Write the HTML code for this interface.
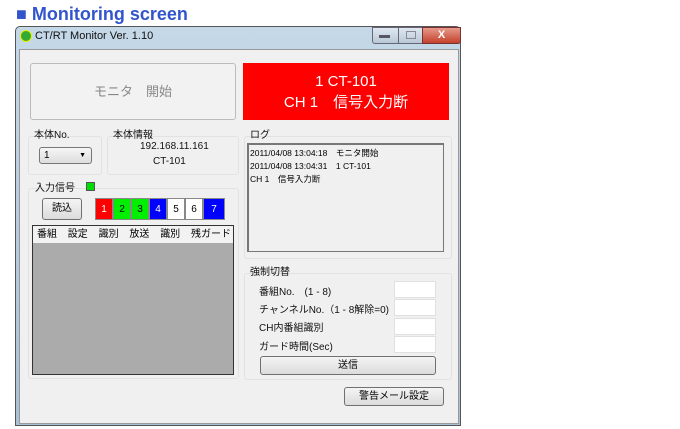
<!DOCTYPE html><html><head><meta charset="utf-8"><style>
body{margin:0;width:680px;height:429px;background:#fff;position:relative;overflow:hidden;font-family:"Liberation Sans","Noto Sans CJK JP",sans-serif;}
.a{position:absolute;}
.t{font-size:10px;color:#111;white-space:nowrap;}
.grp{position:absolute;border:1px solid #e2e2e2;border-radius:3px;background:#f0f0f0;}
.btn{position:absolute;border:1px solid #707070;border-radius:3px;background:linear-gradient(#f4f4f4,#dcdcdc);font-size:10px;text-align:center;box-sizing:border-box;}
.inp{position:absolute;left:394px;width:42px;height:17px;background:#fff;border:1px solid #e0e0e0;box-sizing:border-box;}
.cb{position:absolute;top:198px;width:18px;height:22px;font-size:10px;text-align:center;line-height:22px;box-sizing:border-box;border:1px solid #888;}
</style></head><body>
<div class="a" style="left:16px;top:4px;font-size:18px;font-weight:bold;color:#3355cc;">■ Monitoring screen</div>
<div class="a" style="left:15px;top:26px;width:446px;height:400px;background:linear-gradient(#c4d8e8,#a9c1d5);border:1px solid #555;border-radius:5px 5px 0 0;box-sizing:border-box;"></div>
<div class="a" style="left:20px;top:30px;width:10px;height:10px;border-radius:50%;background:#3a3;border:1px solid #ee0;"></div>
<div class="a" style="left:35px;top:30px;font-size:11px;color:#111;">CT/RT Monitor Ver. 1.10</div>
<div class="a" style="left:372px;top:27px;width:26px;height:15px;background:linear-gradient(#dfe8f0,#b9c8d6);border:1px solid #667;border-radius:0 0 0 3px;"></div>
<div class="a" style="left:379px;top:35px;width:11px;height:3px;background:#556;"></div>
<div class="a" style="left:398px;top:27px;width:24px;height:15px;background:linear-gradient(#dfe8f0,#b9c8d6);border:1px solid #667;"></div>
<div class="a" style="left:406px;top:31px;width:8px;height:6px;border:1px solid #889;"></div>
<div class="a" style="left:422px;top:27px;width:37px;height:15px;background:linear-gradient(#e69a8a,#c4402c);border:1px solid #733;border-radius:0 0 3px 0;color:#fff;font-size:11px;font-weight:bold;text-align:center;line-height:15px;">X</div>
<div class="a" style="left:19px;top:49px;width:440px;height:375px;background:#f0f0f0;border:1px solid #999;box-sizing:border-box;"></div>
<div class="a" style="left:30px;top:63px;width:206px;height:57px;border:1px solid #bbb;border-radius:3px;background:#f2f2f2;box-sizing:border-box;color:#888;font-size:13px;text-align:center;line-height:55px;">モニタ　開始</div>
<div class="a" style="left:243px;top:63px;width:206px;height:57px;background:#f00;color:#fff;font-size:15px;text-align:center;line-height:21px;padding-top:8px;box-sizing:border-box;">1 CT-101<br>CH 1　信号入力断</div>
<div class="grp" style="left:28px;top:136px;width:72px;height:37px;"></div>
<div class="a t" style="left:34px;top:126px;">本体No.</div>
<div class="a" style="left:39px;top:147px;width:53px;height:17px;border:1px solid #777;border-radius:3px;background:linear-gradient(#f6f6f6,#ddd);box-sizing:border-box;font-size:10px;padding-left:4px;line-height:15px;">1<span style="position:absolute;right:5px;font-size:7px;">▼</span></div>
<div class="grp" style="left:107px;top:136px;width:130px;height:37px;"></div>
<div class="a t" style="left:113px;top:126px;">本体情報</div>
<div class="a t" style="left:140px;top:141px;">192.168.11.161</div>
<div class="a t" style="left:153px;top:156px;">CT-101</div>
<div class="grp" style="left:28px;top:188px;width:209px;height:189px;"></div>
<div class="a t" style="left:35px;top:179px;">入力信号</div>
<div class="a" style="left:86px;top:182px;width:7px;height:7px;background:#0d0;border:1px solid #555;"></div>
<div class="btn" style="left:42px;top:198px;width:40px;height:22px;line-height:20px;">読込</div>
<div class="cb" style="left:95px;background:#f00;color:#fff;">1</div>
<div class="cb" style="left:113px;background:#0e0;">2</div>
<div class="cb" style="left:131px;background:#0e0;">3</div>
<div class="cb" style="left:149px;background:#00f;color:#fff;">4</div>
<div class="cb" style="left:167px;background:#fff;">5</div>
<div class="cb" style="left:185px;background:#fff;">6</div>
<div class="cb" style="left:203px;width:22px;background:#00f;color:#fff;">7</div>
<div class="a" style="left:32px;top:225px;width:202px;height:150px;background:#ababab;border:1px solid #333;box-sizing:border-box;"></div>
<div class="a" style="left:33px;top:226px;width:200px;height:17px;background:#f2f2f2;font-size:10px;line-height:17px;white-space:nowrap;display:flex;justify-content:space-between;padding:0 2px 0 4px;box-sizing:border-box;"><span>番組</span><span>設定</span><span>識別</span><span>放送</span><span>識別</span><span>残ガード</span></div>
<div class="grp" style="left:244px;top:136px;width:206px;height:121px;"></div>
<div class="a t" style="left:250px;top:126px;">ログ</div>
<div class="a" style="left:247px;top:143px;width:197px;height:109px;background:#f0f0f0;border:1px solid #777;border-width:2px 1px 1px 2px;box-sizing:border-box;font-size:8.5px;line-height:13px;padding:2px 0 0 1px;white-space:nowrap;">2011/04/08 13:04:18　モニタ開始<br>2011/04/08 13:04:31　1 CT-101<br>CH 1　信号入力断</div>
<div class="grp" style="left:244px;top:273px;width:206px;height:105px;"></div>
<div class="a t" style="left:250px;top:263px;">強制切替</div>
<div class="a t" style="left:259px;top:283px;">番組No.　(1 - 8)</div>
<div class="a t" style="left:259px;top:301px;">チャンネルNo.（1 - 8解除=0)</div>
<div class="a t" style="left:259px;top:319px;">CH内番組識別</div>
<div class="a t" style="left:259px;top:338px;">ガード時間(Sec)</div>
<div class="inp" style="top:281px;"></div>
<div class="inp" style="top:299px;"></div>
<div class="inp" style="top:318px;"></div>
<div class="inp" style="top:336px;"></div>
<div class="btn" style="left:260px;top:356px;width:176px;height:19px;line-height:17px;">送信</div>
<div class="btn" style="left:344px;top:387px;width:100px;height:19px;line-height:17px;">警告メール設定</div>
</body></html>
